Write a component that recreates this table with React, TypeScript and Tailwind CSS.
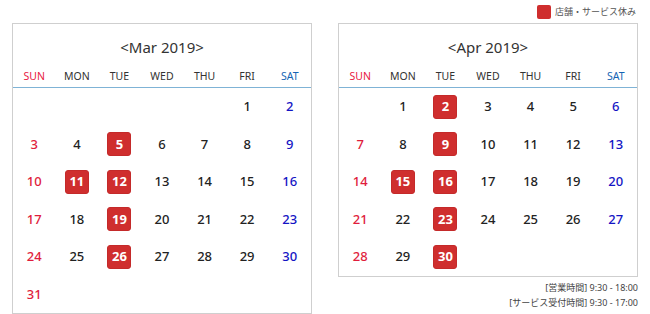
const WEEK = ["SUN", "MON", "TUE", "WED", "THU", "FRI", "SAT"];

type Month = { label: string; start: number; days: number; closed: number[] };

const MONTHS: Month[] = [
  { label: "Mar 2019", start: 5, days: 31, closed: [5, 11, 12, 19, 26] },
  { label: "Apr 2019", start: 1, days: 30, closed: [2, 9, 15, 16, 23, 30] },
];

function headColor(i: number) {
  if (i === 0) return "text-[#e8173f]";
  if (i === 6) return "text-[#1464b4]";
  return "text-[#333]";
}

function dayColor(i: number) {
  if (i === 0) return "text-[#e01d3c]";
  if (i === 6) return "text-[#1414c4]";
  return "text-[#222]";
}

function Calendar({ month }: { month: Month }) {
  const cells: (number | null)[] = [];
  for (let i = 0; i < month.start; i++) cells.push(null);
  for (let d = 1; d <= month.days; d++) cells.push(d);
  while (cells.length % 7 !== 0) cells.push(null);

  return (
    <div className="w-[300px] border border-[#cfcfcf] bg-white">
      <div className="h-[42px] pt-[4px] flex items-center justify-center text-[15px] text-[#333]">
        &lt;{month.label}&gt;
      </div>
      <div className="grid grid-cols-7 h-[22px] items-center border-b border-[#7fb3d6] text-[10.5px]">
        {WEEK.map((w, i) => (
          <div key={w} className={`text-center ${headColor(i)}`}>
            {w}
          </div>
        ))}
      </div>
      <div className="grid grid-cols-7">
        {cells.map((d, idx) => {
          const col = idx % 7;
          const closed = d !== null && month.closed.includes(d);
          return (
            <div key={idx} className="h-[37.5px] flex items-center justify-center text-[13px]">
              {d !== null &&
                (closed ? (
                  <span className="w-[24px] h-[24px] rounded-[3px] bg-[#cf2e2e] border border-[#c42a2a] text-white font-bold flex items-center justify-center">
                    {d}
                  </span>
                ) : (
                  <span className={`font-medium ${dayColor(col)}`}>{d}</span>
                ))}
            </div>
          );
        })}
      </div>
    </div>
  );
}

export default function App() {
  return (
    <div
      className="w-[650px] h-[314px] bg-white px-[12px] pt-[5px] overflow-hidden"
      style={{ fontFamily: '"Noto Sans", "Noto Sans CJK JP", sans-serif' }}
    >
      <div className="flex justify-end items-center h-[14px] pr-[2px]">
        <span className="w-[14px] h-[14px] rounded-[2px] bg-[#cf2e2e] mr-[4px]" />
        <span className="text-[9px] text-[#555]">店舗・サービス休み</span>
      </div>
      <div className="flex gap-[26px] mt-[4px] items-start">
        <Calendar month={MONTHS[0]} />
        <div className="flex flex-col">
          <Calendar month={MONTHS[1]} />
          <div className="mt-[3px] text-right text-[9px] leading-[15px] text-[#444]">
            <div>[営業時間] 9:30 - 18:00</div>
            <div>[サービス受付時間] 9:30 - 17:00</div>
          </div>
        </div>
      </div>
    </div>
  );
}
